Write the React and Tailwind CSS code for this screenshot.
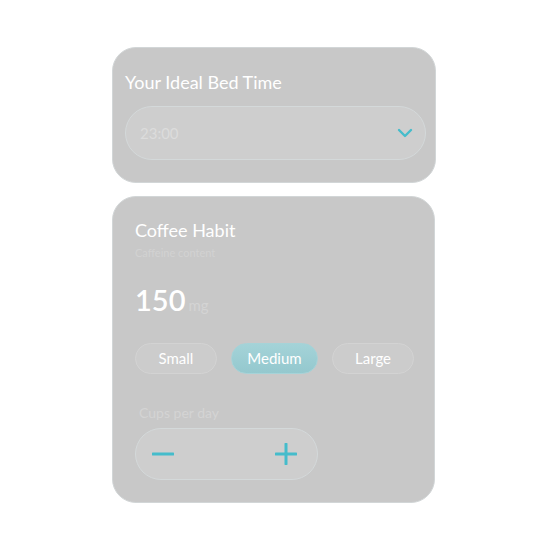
import { useState } from "react";

const FONT = { fontFamily: '"Lato", "Noto Sans", sans-serif' };

function SizeButton({ label, active, onClick, width }) {
  return (
    <button
      onClick={onClick}
      className={`h-[31px] ${width} rounded-full border text-[15px] text-white ${
        active
          ? "border-[#a6d3d8] bg-gradient-to-b from-[#a4d3d8] to-[#94c8ce]"
          : "border-[#d3d3d3] bg-[#cccccc]"
      }`}
    >
      {label}
    </button>
  );
}

export default function App() {
  const [size, setSize] = useState("medium");
  const [cups, setCups] = useState(0);

  return (
    <div className="w-[550px] h-[550px] bg-white pt-[47px] pl-[112px]" style={FONT}>
      {/* bed time card */}
      <div className="w-[324px] h-[136px] rounded-[24px] bg-[#c8c8c8] border border-[#d2d6d7] px-[12px] pt-[21px]">
        <h2 className="text-[18px] leading-[26px] text-white">Your Ideal Bed Time</h2>
        <div className="mt-[11px] h-[54px] w-[301px] rounded-full border border-[#d4d9da] bg-[#cecece] flex items-center justify-between pl-[14px] pr-[12px]">
          <span className="text-[15px] text-[#dcdcdc]">23:00</span>
          <svg width="16" height="10" viewBox="0 0 16 10" fill="none">
            <path d="M2 2l6 6 6-6" stroke="#45bccb" strokeWidth="2.4" strokeLinecap="round" strokeLinejoin="round" />
          </svg>
        </div>
      </div>

      {/* coffee card */}
      <div className="mt-[13px] w-[323px] h-[307px] rounded-[24px] bg-[#c8c8c8] border border-[#d2d6d7] pl-[22px] pt-[20px]">
        <h2 className="text-[18px] leading-[26px] text-white">Coffee Habit</h2>
        <p className="text-[11px] leading-[14px] text-[#d2d2d2] mt-[3px]">Caffeine content</p>

        <div className="mt-[22px] flex items-baseline gap-[3px]">
          <span className="text-[29px] leading-[36px] font-semibold text-white">150</span>
          <span className="text-[15px] text-[#d4d4d4]">mg</span>
        </div>

        <div className="mt-[25px] flex gap-[14px]">
          <SizeButton label="Small" width="w-[82px]" active={size === "small"} onClick={() => setSize("small")} />
          <SizeButton label="Medium" width="w-[87px]" active={size === "medium"} onClick={() => setSize("medium")} />
          <SizeButton label="Large" width="w-[82px]" active={size === "large"} onClick={() => setSize("large")} />
        </div>

        <p className="mt-[30px] pl-[4px] text-[14px] leading-[18px] text-[#d4d4d4]">Cups per day</p>

        <div className="mt-[6px] h-[52px] w-[183px] rounded-full border border-[#d4d9da] bg-[#cecece] flex items-center justify-between pl-[16px] pr-[20px]">
          <button onClick={() => setCups(Math.max(0, cups - 1))} className="w-[22px] h-[22px] flex items-center justify-center">
            <svg width="22" height="22" viewBox="0 0 22 22">
              <path d="M1 11h20" stroke="#45bccb" strokeWidth="3" strokeLinecap="round" />
            </svg>
          </button>
          <span className="text-[15px] text-[#d0d0d0]">{cups > 0 ? cups : ""}</span>
          <button onClick={() => setCups(cups + 1)} className="w-[22px] h-[22px] flex items-center justify-center">
            <svg width="22" height="22" viewBox="0 0 22 22">
              <path d="M1 11h20M11 1v20" stroke="#45bccb" strokeWidth="3" strokeLinecap="round" />
            </svg>
          </button>
        </div>
      </div>
    </div>
  );
}
